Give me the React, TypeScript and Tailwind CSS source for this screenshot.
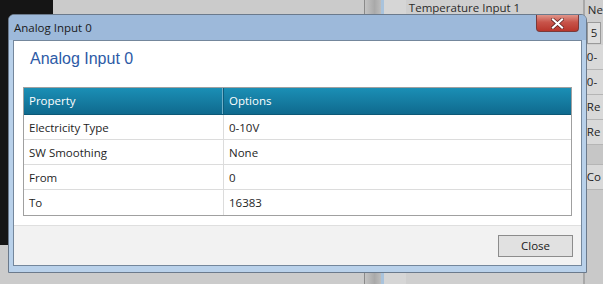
import React from "react";

const rows: [string, string][] = [
  ["Electricity Type", "0-10V"],
  ["SW Smoothing", "None"],
  ["From", "0"],
  ["To", "16383"],
];

const sideCells = ["0-", "0-", "Re", "Re", "", "Co"];

export default function App() {
  return (
    <div className="relative w-[603px] h-[284px] overflow-hidden bg-[#cbcbcb] font-['Open_Sans',sans-serif] text-[11px] text-[#1e1e1e]">
      {/* background application */}
      <div className="flex h-full">
        <div className="w-[54px] h-[245px] bg-[#151515]" />
        <div className="w-[314px] h-full bg-[#cbcbcb]" />
        <div className="w-[20px] h-full flex">
          <div className="w-[1px] h-full bg-[#8a8a8a]" />
          <div className="w-[16px] h-full bg-[linear-gradient(90deg,#c4c4c4,#a9a9a9_60%,#bdbdbd)]" />
          <div className="w-[3px] h-full bg-[#a9c3dc]" />
        </div>
        <div className="w-[22px] h-full bg-[#d6d6d6]" />
        <div className="flex-1 h-full bg-[#cfcfcf] flex">
          <div className="w-[177px] h-full">
            <div className="pl-[3px] leading-[16px] text-[11.5px] text-[#2a2a2a]">Temperature Input 1</div>
          </div>
          <div className="w-[2px] h-full bg-[#a8a8a8]" />
          <div className="flex-1 h-full flex flex-col">
            <div className="h-[21px] pl-[3px] leading-[20px] text-[11.5px] text-[#2a2a2a]">Ne</div>
            <div className="h-[24px] px-[2px] py-[1px]">
              <div className="h-full border border-[#9a9a9a] bg-[#dedede] pl-[3px] leading-[20px] text-[11.5px]">5</div>
            </div>
            {sideCells.map((c, i) => (
              <div
                key={i}
                className={`border-b border-[#b5b5b5] pl-[2px] text-[11.5px] leading-[24px] ${i === 4 ? "h-[20px] bg-[#c6c6c6]" : "h-[25px] bg-[#d9d9d9]"}`}
              >
                {c}
              </div>
            ))}
            <div className="flex-1 bg-[#c9c9c9]" />
          </div>
        </div>
      </div>

      {/* dialog window */}
      <div className="absolute left-[8px] top-[14px] w-[579px] h-[259px] rounded-t-[6px] border border-[#6b7a8c] bg-[#b9d1ea] flex flex-col overflow-hidden">
        <div className="h-[25px] shrink-0 bg-[#9db9da] flex items-start justify-between pl-[5px] pr-[7px]">
          <span className="text-[11.5px] leading-[25px] text-[#1a1a1a]">Analog Input 0</span>
          <div className="w-[43px] h-[17px] rounded-b-[4px] border border-t-0 border-[#7a3a3a] bg-[linear-gradient(180deg,#e0958a,#c8544a_45%,#b8362c)] flex items-center justify-center">
            <svg width="13" height="11" viewBox="0 0 13 11">
              <path d="M2 1.5 L11 9.5 M11 1.5 L2 9.5" stroke="#5a2020" strokeWidth="3.6" strokeLinecap="square" />
              <path d="M2 1.5 L11 9.5 M11 1.5 L2 9.5" stroke="#ffffff" strokeWidth="2.2" strokeLinecap="square" />
            </svg>
          </div>
        </div>
        <div className="flex-1 px-[4px] pb-[6px] pt-0 flex">
          <div className="flex-1 border border-[#74879c] bg-white flex flex-col">
            <div className="flex-1 bg-white px-[9px]">
              <div className="pl-[7px] pt-[8px] h-[46px] font-['Liberation_Sans',sans-serif] text-[16px] leading-[20px] text-[#2d5aa6]">
                Analog Input 0
              </div>
              <div className="border border-[#a0a0a0]">
                <div className="flex h-[27px] bg-[linear-gradient(180deg,#1b8fb5,#0f6a8e)] text-white text-[11.5px] border-b border-[#0c5876]">
                  <div className="w-[199px] pl-[5px] leading-[26px] border-r border-[#6fb0c9]">Property</div>
                  <div className="flex-1 pl-[5px] leading-[26px] border-l border-[#0d5d7c]">Options</div>
                </div>
                {rows.map(([k, v], i) => (
                  <div key={k} className={`flex h-[25px] text-[11.5px] ${i < rows.length - 1 ? "border-b border-[#dcdcdc]" : ""}`}>
                    <div className="w-[200px] pl-[5px] leading-[25px] border-r border-[#dcdcdc]">{k}</div>
                    <div className="flex-1 pl-[5px] leading-[25px]">{v}</div>
                  </div>
                ))}
              </div>
            </div>
            <div className="h-[40px] shrink-0 border-t border-[#dfdfdf] bg-[#f2f2f2] flex items-center justify-end pr-[8px]">
              <button className="w-[75px] h-[22px] border border-[#8c8c8c] bg-[#e1e1e1] text-[11.5px] leading-[20px] text-[#1a1a1a]">Close</button>
            </div>
          </div>
        </div>
      </div>
    </div>
  );
}
